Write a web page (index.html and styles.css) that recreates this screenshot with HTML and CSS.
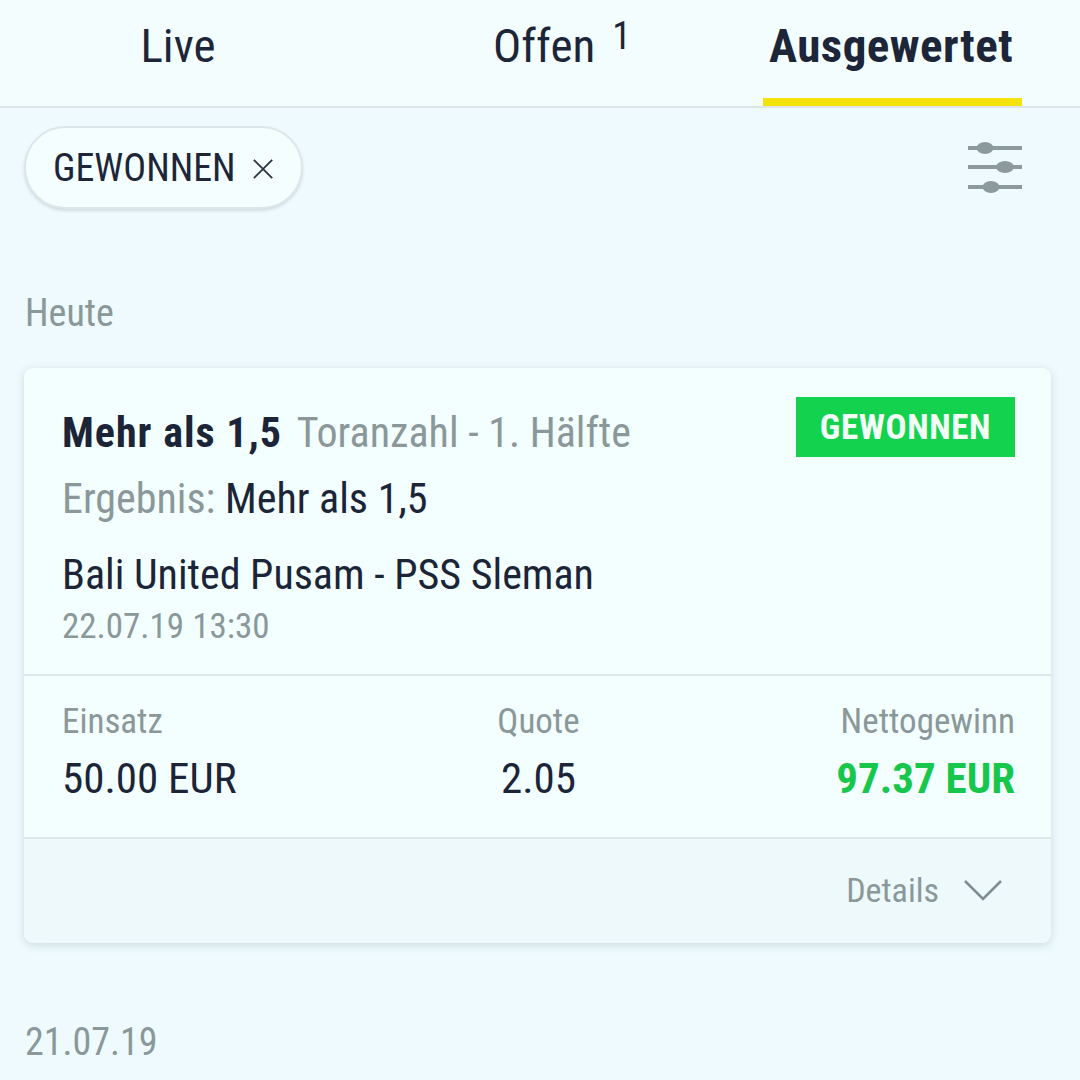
FILE: index.html
```html
<!DOCTYPE html>
<html lang="de">
<head>
<meta charset="utf-8">
<link rel="stylesheet" href="styles.css">
</head>
<body>
<header class="tabs">
  <div class="tab tab-live"><span class="tab-label">Live</span></div>
  <div class="tab tab-open"><span class="tab-label">Offen<sup class="count">1</sup></span></div>
  <div class="tab tab-done active"><span class="tab-label">Ausgewertet</span></div>
</header>
<main class="content">
  <div class="filter-row">
    <div class="chip">GEWONNEN
      <svg class="chip-x" width="24" height="24" viewBox="0 0 24 24"><path d="M2 2 L22 22 M22 2 L2 22" stroke="#2a3344" stroke-width="2" fill="none"/></svg>
    </div>
    <svg class="filter-icon" width="54" height="52" viewBox="0 0 54 52">
      <g fill="#8c9a9d">
        <rect x="0" y="4" width="54" height="4"/>
        <rect x="0" y="23" width="54" height="4"/>
        <rect x="0" y="43" width="54" height="4"/>
        <ellipse cx="17" cy="6" rx="8.5" ry="6"/>
        <ellipse cx="37" cy="25" rx="9" ry="6"/>
        <ellipse cx="23" cy="45" rx="8.5" ry="6"/>
      </g>
    </svg>
  </div>
  <div class="day">Heute</div>
  <article class="card">
    <section class="card-top">
      <div class="bet-head">
        <div class="bet-title"><b>Mehr als 1,5</b> <span class="muted sub">Toranzahl - 1. Hälfte</span></div>
        <div class="badge">GEWONNEN</div>
      </div>
      <div class="result"><span class="muted">Ergebnis:</span> Mehr als 1,5</div>
      <div class="match">Bali United Pusam - PSS Sleman</div>
      <div class="date">22.07.19 13:30</div>
    </section>
    <section class="card-stats">
      <div class="stat stat-left">
        <div class="stat-label">Einsatz</div>
        <div class="stat-value">50.00 EUR</div>
      </div>
      <div class="stat stat-mid">
        <div class="stat-label">Quote</div>
        <div class="stat-value">2.05</div>
      </div>
      <div class="stat stat-right">
        <div class="stat-label">Nettogewinn</div>
        <div class="stat-value win">97.37 EUR</div>
      </div>
    </section>
    <section class="card-foot">
      <span class="details">Details</span>
      <svg class="chev" width="40" height="24" viewBox="0 0 40 24"><path d="M2 3 L20 21 L38 3" fill="none" stroke="#7f8e91" stroke-width="2.6"/></svg>
    </section>
  </article>
  <div class="day day2">21.07.19</div>
</main>
</body>
</html>
```
FILE: styles.css
```css
* { box-sizing: border-box; }
html, body { margin: 0; padding: 0; }
body {
  width: 1080px;
  height: 1080px;
  overflow: hidden;
  background: #eefafd;
  font-family: "Roboto Condensed", Roboto, "Liberation Sans", sans-serif;
  font-stretch: condensed;
  color: #1b2537;
}
.tabs {
  display: grid;
  grid-template-columns: 356px 366px 358px;
  height: 108px;
  background: #f3fdfe;
  border-bottom: 2px solid #dce6e9;
}
.tab {
  display: flex;
  justify-content: center;
  align-items: flex-start;
  position: relative;
}
.tab-label {
  font-size: 47px;
  line-height: 1;
  margin-top: 22px;
  color: #1c2638;
  position: relative;
}
.tab-open { justify-content: flex-start; padding-left: 137px; }
.count {
  font-size: 38px;
  line-height: 1;
  vertical-align: top;
  position: relative;
  top: -5px;
  margin-left: 17px;
}
.tab-done .tab-label { font-weight: 700; letter-spacing: 0.5px; }
.tab-done { padding-right: 20px; }
.tab-done::after {
  content: "";
  position: absolute;
  left: 41px;
  width: 259px;
  bottom: 0;
  height: 8px;
  background: #f5e20c;
}
.content { padding: 0 28px 0 24px; }
.filter-row {
  display: flex;
  justify-content: space-between;
  align-items: flex-start;
  padding-top: 18px;
}
.chip {
  height: 83px;
  width: 279px;
  border-radius: 42px;
  background: #f5feff;
  border: 2px solid #dde6e9;
  box-shadow: 0 2px 3px rgba(120, 140, 150, 0.25);
  display: flex;
  align-items: center;
  padding-left: 27px;
  font-size: 38px;
  color: #1c2638;
}
.chip-x { margin-left: 16px; margin-top: 2px; width: 22px; height: 22px; }
.filter-icon { margin-top: 16px; margin-right: 30px; }
.day {
  margin-top: 85px;
  font-size: 38px;
  line-height: 1;
  color: #8a9899;
  padding-left: 1px;
}
.card {
  margin-top: 36px;
  background: #f3feff;
  border-radius: 9px;
  box-shadow: 0 2px 8px rgba(110, 140, 150, 0.28);
  overflow: hidden;
  width: 1027px;
}
.card-top {
  padding: 29px 36px 30px 38px;
  border-bottom: 2px solid #dde8eb;
}
.bet-head {
  display: flex;
  justify-content: space-between;
  align-items: flex-start;
}
.bet-title {
  font-size: 42px;
  line-height: 1;
  margin-top: 15px;
  color: #1b2537;
}
.bet-title b { font-weight: 700; letter-spacing: 1px; }
.sub { margin-left: 5px; }
.muted { color: #8a9899; }
.badge {
  background: #13d24d;
  color: #f3fff6;
  font-weight: 700;
  font-size: 35px;
  letter-spacing: 0.6px;
  height: 60px;
  width: 219px;
  display: flex;
  align-items: center;
  justify-content: center;
  margin-top: 0;
}
.result { font-size: 42px; line-height: 1; margin-top: 21px; }
.match { font-size: 42px; line-height: 1; margin-top: 34px; }
.date { font-size: 35px; line-height: 1; margin-top: 13px; color: #8a9899; }
.card-stats {
  display: grid;
  grid-template-columns: 1fr 1fr 1fr;
  padding: 28px 36px 37px 38px;
  border-bottom: 2px solid #dde8eb;
}
.stat-label { font-size: 35px; line-height: 1; color: #8a9899; }
.stat-value { font-size: 43px; line-height: 1; margin-top: 18px; color: #1b2537; }
.stat-mid { text-align: center; }
.stat-right { text-align: right; }
.win { color: #17c74b; font-weight: 700; }
.card-foot {
  background: #eef9fc;
  height: 104px;
  display: flex;
  justify-content: flex-end;
  align-items: center;
  padding-right: 48px;
  gap: 24px;
}
.details { font-size: 34px; color: #8a9899; margin-top: -3px; }
.chev { margin-top: -2px; }
.day2 { margin-top: 80px; }
```
